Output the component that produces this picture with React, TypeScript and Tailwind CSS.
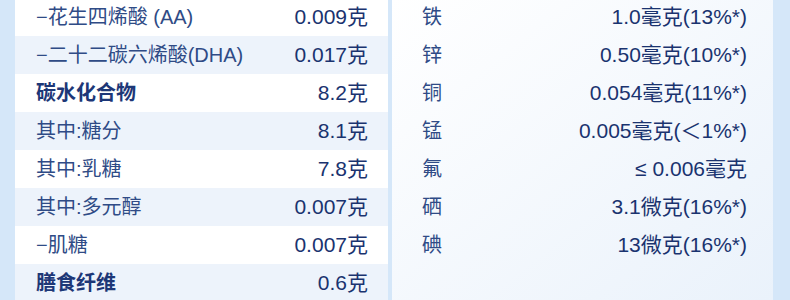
const font = {
  fontFamily: '"Liberation Sans", "Noto Sans CJK SC", sans-serif',
};

type Row = { label: string; value: string; bold?: boolean };

const leftRows: Row[] = [
  { label: "−花生四烯酸 (AA)", value: "0.009克" },
  { label: "−二十二碳六烯酸(DHA)", value: "0.017克" },
  { label: "碳水化合物", value: "8.2克", bold: true },
  { label: "其中:糖分", value: "8.1克" },
  { label: "其中:乳糖", value: "7.8克" },
  { label: "其中:多元醇", value: "0.007克" },
  { label: "−肌糖", value: "0.007克" },
  { label: "膳食纤维", value: "0.6克", bold: true },
];

const rightRows: Row[] = [
  { label: "铁", value: "1.0毫克(13%*)" },
  { label: "锌", value: "0.50毫克(10%*)" },
  { label: "铜", value: "0.054毫克(11%*)" },
  { label: "锰", value: "0.005毫克(＜1%*)" },
  { label: "氟", value: "≤ 0.006毫克" },
  { label: "硒", value: "3.1微克(16%*)" },
  { label: "碘", value: "13微克(16%*)" },
];

export default function App() {
  return (
    <div
      className="w-[790px] h-[300px] overflow-hidden bg-[#d5e7f9] flex pl-[15px] pr-[17px] gap-[4px]"
      style={font}
    >
      {/* 左表：条纹行 */}
      <div className="w-[373px] bg-white flex flex-col -mt-[2px]">
        {leftRows.map((r, i) => (
          <div
            key={r.label}
            className={`h-[38px] shrink-0 flex items-center justify-between pl-[21px] pr-[20px] ${
              i % 2 === 1 ? "bg-[#edf3fb]" : "bg-white"
            }`}
          >
            <span
              className={`text-[20px] ${
                r.bold ? "font-bold text-[#1d3777]" : "text-[#2f4b86]"
              }`}
            >
              {r.label}
            </span>
            <span className="text-[21px] text-[#1a336f]">{r.value}</span>
          </div>
        ))}
      </div>

      {/* 右表：矿物质 */}
      <div className="flex-1 bg-gradient-to-br from-white to-[#eaf2fb] flex flex-col -mt-[2px] pl-[30px] pr-[26px]">
        {rightRows.map((r) => (
          <div
            key={r.label}
            className="h-[38px] shrink-0 flex items-center justify-between"
          >
            <span className="text-[20px] text-[#2f4b86]">{r.label}</span>
            <span className="text-[21px] text-[#1a336f]">{r.value}</span>
          </div>
        ))}
      </div>
    </div>
  );
}
